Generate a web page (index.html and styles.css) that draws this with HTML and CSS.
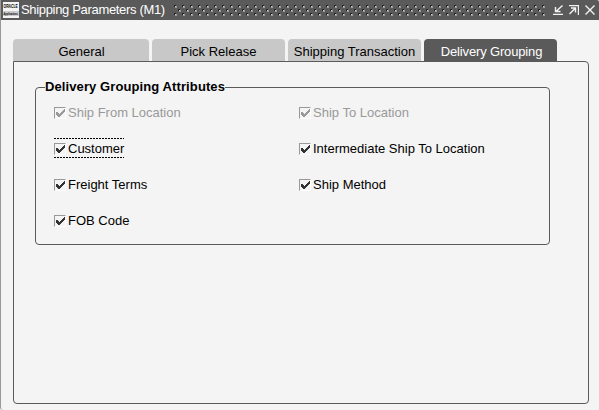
FILE: index.html
```
<!DOCTYPE html>
<html lang="en">
<head>
    <meta charset="UTF-8">
    <title>Shipping Parameters (M1)</title>
    <link rel="stylesheet" href="styles.css">
</head>
<body>
    <svg class="defs" width="0" height="0">
        <symbol id="check" viewBox="0 0 10 10">
            <path d="M8 1h2v3h-1v1h-1v1h-1v1h-1v1h-1v1h-2v-1h-1v-1h-1v-3h2v1h1v1h1v-1h1v-1h1v-1h1v-1h1z" fill="currentColor"/>
        </symbol>
    </svg>
    <div class="window">
        <div class="title-bar">
            <svg class="logo" width="16" height="16" viewBox="0 0 16 16">
                <rect width="16" height="16" fill="#f4f4f4"/>
                <rect y="9" width="16" height="5" fill="#ccc"/>
                <text transform="translate(0.5 6) scale(1 1.4)" font-size="3.4" font-weight="bold">ORACLE</text>
                <text transform="translate(0.5 13) scale(1 1.8)" font-size="2.4" font-style="italic" font-weight="bold">Applications</text>
            </svg>
            <span class="title">Shipping Parameters (M1)</span>
            <svg class="grip" height="12" shape-rendering="crispEdges">
                <defs>
                    <pattern id="dots" width="8" height="8" patternUnits="userSpaceOnUse">
                        <path d="M0 0h2v1h-1v1h-1zM4 4h2v1h-1v1h-1z" fill="#222"/>
                        <path d="M1 1h2v2h-2zM5 5h2v2h-2z" fill="#999"/>
                        <path d="M1 1h1v1h-1zM5 5h1v1h-1z" fill="#ccc"/>
                    </pattern>
                </defs>
                <rect width="100%" height="12" fill="url(#dots)"/>
            </svg>
            <div class="controls">
                <svg width="10" height="10" viewBox="0 0 10 10">
                    <path d="M9.5 0.5L3.5 6M2.5 2v4.5h5M0 9.5h10"/>
                </svg>
                <svg width="10" height="10" viewBox="0 0 10 10">
                    <path d="M0.5 9L6 3.5M2 3h4.5v4.5M0 0.5h9.5v9.5"/>
                </svg>
                <svg width="10" height="10" viewBox="0 0 10 10">
                    <path d="M0.5 0.5l9 9M9.5 0.5l-9 9"/>
                </svg>
            </div>
        </div>
        <div class="tabs">
            <div class="tab first">General</div>
            <div class="tab">Pick Release</div>
            <div class="tab">Shipping Transaction</div>
            <div class="tab active">Delivery Grouping</div>
        </div>
        <div class="panel">
            <fieldset class="group">
                <legend>Delivery Grouping Attributes</legend>
                <div class="options">
                    <div class="option disabled"><svg class="box"><use href="#check"/></svg>Ship From Location</div>
                    <div class="option disabled"><svg class="box"><use href="#check"/></svg>Ship To Location</div>
                    <div class="option focused"><svg class="box"><use href="#check"/></svg>Customer</div>
                    <div class="option"><svg class="box"><use href="#check"/></svg>Intermediate Ship To Location</div>
                    <div class="option"><svg class="box"><use href="#check"/></svg>Freight Terms</div>
                    <div class="option"><svg class="box"><use href="#check"/></svg>Ship Method</div>
                    <div class="option"><svg class="box"><use href="#check"/></svg>FOB Code</div>
                </div>
            </fieldset>
        </div>
    </div>
</body>
</html>
```
FILE: styles.css
```
body {
    margin: 0;
    background-color: #f4f4f4;
    color: #000;
    font-family: "Liberation Sans", Arial, sans-serif;
    font-size: 13px;
    line-height: 16px;
    overflow: hidden;
}

.defs {
    display: block;
}

.window {
    box-sizing: border-box;
    height: 410px;
    border-left: 1px solid #999;
    border-bottom-left-radius: 3px;
}

.title-bar {
    display: flex;
    align-items: center;
    height: 20px;
    padding: 0 3px 0 2px;
    background-color: #5a5a5a;
    border-top-right-radius: 2px;
    color: #fff;
}

.logo {
    flex: none;
    margin-right: 2px;
}

.title {
    flex: none;
    width: 153px;
    white-space: nowrap;
    letter-spacing: -0.33px;
}

.grip {
    flex: none;
    width: 372px;
    margin-top: 2px;
}

.controls {
    display: flex;
    gap: 6px;
    margin-left: 7px;
}

.controls svg {
    fill: none;
    stroke: #f4f4f4;
    stroke-width: 1.4;
}

.tabs {
    display: flex;
    gap: 3px;
    margin: 19px 0 0 12px;
}

.tab {
    box-sizing: border-box;
    width: 133px;
    height: 22px;
    padding-top: 5px;
    background-color: #c8c8c8;
    border-radius: 4px 4px 0 0;
    text-align: center;
    white-space: nowrap;
}

.tab.first {
    width: 136px;
    padding-left: 1px;
}

.tab.active {
    padding-left: 2px;
    background-color: #5a5a5a;
    color: #fff;
    letter-spacing: -0.15px;
}

.panel {
    box-sizing: border-box;
    width: 576px;
    height: 343px;
    margin-left: 12px;
    padding: 17px 0 0 21px;
    border: 1px solid #5a5a5a;
    border-radius: 0 4px 4px 4px;
}

.group {
    box-sizing: border-box;
    width: 515px;
    height: 166px;
    margin: 0;
    padding: 0 0 0 18px;
    border: 1px solid #5a5a5a;
    border-radius: 4px;
}

.group legend {
    margin-left: -9px;
    padding: 0;
    font-weight: bold;
    letter-spacing: 0.1px;
}

.options {
    display: grid;
    grid-template-columns: 245px 245px;
    row-gap: 16px;
    padding-top: 7px;
}

.option {
    display: flex;
    align-items: center;
    justify-self: start;
    box-sizing: border-box;
    height: 20px;
    padding-top: 1px;
    white-space: nowrap;
}

.option.disabled {
    color: #999;
}

.option.focused {
    background-image: repeating-linear-gradient(90deg, #000 0 2px, transparent 2px 3px), repeating-linear-gradient(90deg, #000 0 2px, transparent 2px 3px);
    background-position: top, bottom;
    background-repeat: no-repeat;
    background-size: 100% 1px;
}

.box {
    box-sizing: border-box;
    width: 12px;
    height: 12px;
    margin-right: 2px;
    border: 1px solid #999;
    border-right-color: #fff;
    border-bottom-color: #fff;
    color: #333;
    shape-rendering: crispEdges;
}

.disabled .box {
    color: #999;
}
```
